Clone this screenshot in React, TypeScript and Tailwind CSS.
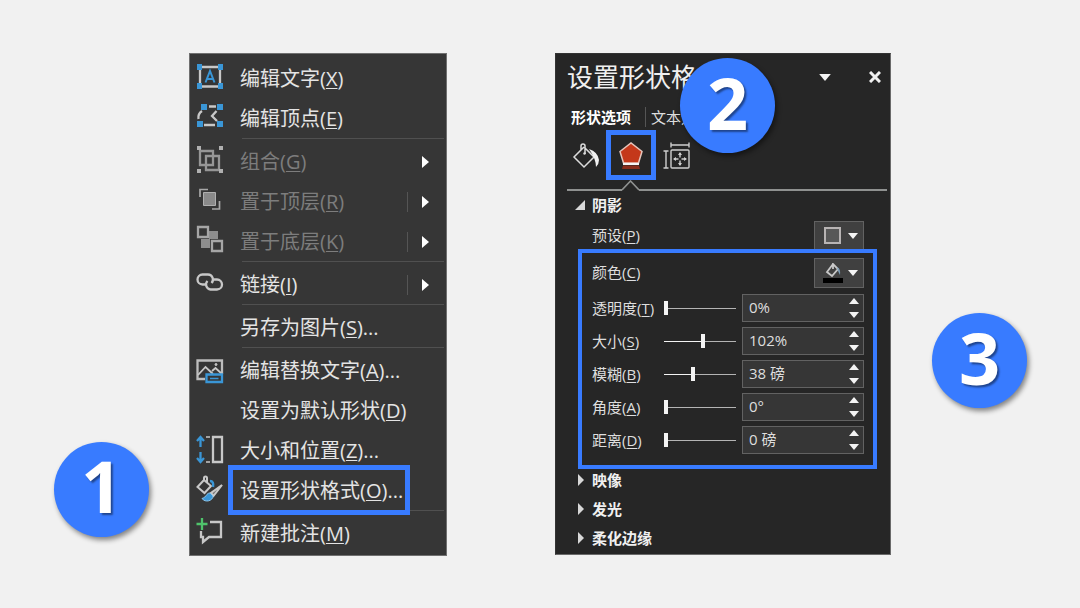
import { FC, Fragment, PropsWithChildren, ReactElement, ReactNode, useState } from "react";

type MenuItem = {
  disabled?: boolean;
  hotkey: string;
  icon?: ReactNode;
  label: string;
  marked?: boolean;
  more?: boolean;
  separator?: boolean;
  split?: boolean;
  submenu?: boolean;
};

type SliderItem = { hotkey: string; id: string; label: string; percent: number; value: string };

const Icon: FC<PropsWithChildren> = (props): ReactElement => (
  <svg aria-hidden="true" className="size-7 shrink-0 overflow-visible" fill="none" stroke="#c8c8c8" strokeWidth="2.300" viewBox="0 0 28 28">
    {props.children}
  </svg>
);

const menu: MenuItem[] = [
  {
    label: "编辑文字",
    hotkey: "X",
    icon: (
      <Icon>
        <path d="M4 2H24V21.500H4Z" />
        <path d="M9.500 17.500L14 6L18.500 17.500M11 14H17" stroke="#3a96d6" strokeWidth="2" />
        <path d="M1-1h5v6H1zM22-1h5v6h-5zM1 18h5v6H1zM22 18h5v6h-5z" fill="#3a96d6" stroke="none" />
      </Icon>
    ),
  },
  {
    label: "编辑顶点",
    hotkey: "E",
    separator: true,
    icon: (
      <Icon>
        <path d="M13 1.500H20M6 6C3 8 2 11 2.500 14M8 20H19M20.500 6L16 11L21 16" />
        <path d="M5-1h6v6H5zM21-1h6v6h-6zM1 16h6v6H1zM21 16h6v6h-6z" fill="#3a96d6" stroke="none" />
      </Icon>
    ),
  },
  {
    label: "组合",
    hotkey: "G",
    disabled: true,
    submenu: true,
    icon: (
      <Icon>
        <path d="M4 3H17V17H4ZM10 8H23V22H10Z" stroke="#969696" />
        <path d="M1-2h4v4H1zM23-2h4v4h-4zM1 21h4v4H1zM23 21h4v4h-4z" fill="#b0b0b0" stroke="none" />
      </Icon>
    ),
  },
  {
    label: "置于顶层",
    hotkey: "R",
    disabled: true,
    split: true,
    submenu: true,
    icon: (
      <Icon>
        <path d="M4 9V1.500H12M16 21H23.500V13" stroke="#a8a8a8" strokeWidth="1.700" />
        <path d="M7.500 4.500H19.500V17.500H7.500Z" fill="#8a8a8a" stroke="#b0b0b0" strokeWidth="1" />
      </Icon>
    ),
  },
  {
    label: "置于底层",
    hotkey: "K",
    disabled: true,
    split: true,
    submenu: true,
    separator: true,
    icon: (
      <Icon>
        <path d="M13 3h9v8h-9zM5 11h9v9H5z" fill="#8e8e8e" stroke="none" />
        <path d="M2-1H12V9H2ZM16 13H26V23H16Z" fill="#363636" stroke="#a6a6a6" />
      </Icon>
    ),
  },
  {
    label: "链接",
    hotkey: "I",
    split: true,
    submenu: true,
    separator: true,
    icon: (
      <Icon>
        <path d="M9 13.500H6.500A5 5 0 0 1 6.500 3.500H12A5 5 0 0 1 15.500 12M18 8.500H21A5 5 0 0 1 21 18.500H14.500A5 5 0 0 1 11.500 10" />
      </Icon>
    ),
  },
  { label: "另存为图片", hotkey: "S", more: true, separator: true },
  {
    label: "编辑替换文字",
    hotkey: "A",
    more: true,
    icon: (
      <Icon>
        <path d="M9 22H1.500V3.500H26V17" stroke="#bdbdbd" />
        <path d="M2 18L9.500 10L17 17M16 14L19.500 11L26 17" strokeWidth="1.800" />
        <circle cx="20" cy="7.500" fill="#c8c8c8" r="1" strokeWidth="1" />
        <path d="M10.500 17.500H26V25H10.500Z" fill="#363636" stroke="#3a96d6" />
        <path d="M14 21.500H22.500" stroke="#3a96d6" strokeWidth="1.500" />
      </Icon>
    ),
  },
  { label: "设置为默认形状", hotkey: "D" },
  {
    label: "大小和位置",
    hotkey: "Z",
    more: true,
    icon: (
      <Icon>
        <path d="M4.500 0V10M1 4L4.500 0L8 4M4.500 15V25M1 21L4.500 25L8 21" stroke="#3a96d6" />
        <path d="M17 0H26V25H17Z" />
        <path d="M10 0H14M10 25H14" strokeWidth="1.700" />
      </Icon>
    ),
  },
  {
    label: "设置形状格式",
    hotkey: "O",
    more: true,
    marked: true,
    separator: true,
    icon: (
      <Icon>
        <path d="M8 3L1.500 10L8.500 16L15 9L8 3V1C8-1 11-1 11 1V6" strokeWidth="2" />
        <path d="M14 4Q18 4 17 10" stroke="#3a96d6" strokeWidth="2.500" />
        <path d="M26 8L15 16L17.500 19Z" fill="#777" strokeWidth="2" />
        <path d="M14 16C10 16 11 20 6 21.500C9 26 17 24 17 19Z" fill="#3a96d6" stroke="#8cc4ea" strokeWidth="1" />
      </Icon>
    ),
  },
  {
    label: "新建批注",
    hotkey: "M",
    icon: (
      <Icon>
        <path d="M14 2H25V17H13L7 22V17H5V11" />
        <path d="M6-2V10M.500 4H11.500" stroke="#4fc36b" />
      </Icon>
    ),
  },
];

const sliders: SliderItem[] = [
  { id: "transparency", label: "透明度", hotkey: "T", value: "0%", percent: 0 },
  { id: "size", label: "大小", hotkey: "S", value: "102%", percent: 54 },
  { id: "blur", label: "模糊", hotkey: "B", value: "38 磅", percent: 40 },
  { id: "angle", label: "角度", hotkey: "A", value: "0°", percent: 0 },
  { id: "distance", label: "距离", hotkey: "D", value: "0 磅", percent: 0 },
];

const Hotkey: FC<{ letter: string }> = (props): ReactElement => (
  <>
    (<span className="underline decoration-1 underline-offset-2">{props.letter}</span>)
  </>
);

const Badge: FC<PropsWithChildren<{ className: string }>> = (props): ReactElement => (
  <div
    className={`absolute flex size-[95px] items-center justify-center rounded-full bg-[#387bff] pb-2 font-["Open_Sans",sans-serif] text-[72px] leading-none font-bold text-white shadow-[2px_3px_5px_rgba(0,0,0,0.45)] text-shadow-[2px_2px_2px_rgba(0,0,0,0.45)] ${props.className}`}
  >
    {props.children}
  </div>
);

const CaretDown: FC<{ className?: string }> = (props): ReactElement => (
  <svg aria-hidden="true" className={props.className} fill="#f4f4f4" height="6" viewBox="0 0 10 6" width="10">
    <path d="M0 0H10L5 6Z" />
  </svg>
);

const MenuRow: FC<{ item: MenuItem }> = ({ item }): ReactElement => (
  <button
    className={`relative flex h-10 w-full items-center pl-1.5 text-left text-xl whitespace-nowrap ${item.disabled ? "text-[#7d7d7d]" : "text-[#e4e4e4]"}`}
    type="button"
  >
    <span className="mr-4 size-7">{item.icon}</span>
    <span className="flex-1">
      {item.label}
      <Hotkey letter={item.hotkey} />
      {item.more && "..."}
    </span>
    {item.split && <span className="mr-3.5 h-5 w-px bg-[#555]" />}
    {item.submenu && (
      <svg aria-hidden="true" className="mr-[17px]" fill="#fff" height="12" viewBox="0 0 7 12" width="7">
        <path d="M0 0L7 6L0 12Z" />
      </svg>
    )}
    {item.marked && <span className="absolute -top-1.5 -bottom-1 left-[38px] w-[182px] border-5 border-[#387bff]" />}
  </button>
);

const ContextMenu: FC = (): ReactElement => (
  <nav className="w-[258px] border border-[#707070] bg-[#363636] pt-[5px] pb-px">
    {menu.map((item) => (
      <Fragment key={item.hotkey}>
        <MenuRow item={item} />
        {item.separator && <div className="-mt-px mr-0.5 mb-[3px] ml-[52px] h-px bg-[#505050]" />}
      </Fragment>
    ))}
  </nav>
);

const SliderRow: FC<{ item: SliderItem }> = ({ item }): ReactElement => {
  const [percent, setPercent] = useState(item.percent);

  return (
    <div className="grid grid-cols-[72px_1fr_122px] items-center">
      <label className="whitespace-nowrap" htmlFor={item.id}>
        {item.label}
        <Hotkey letter={item.hotkey} />
      </label>
      <input
        aria-label={item.label}
        className="mr-1.5 h-3.5 min-w-0 appearance-none bg-[length:100%_1px] bg-center bg-no-repeat [&::-webkit-slider-thumb]:h-3.5 [&::-webkit-slider-thumb]:w-1 [&::-webkit-slider-thumb]:appearance-none [&::-webkit-slider-thumb]:bg-[#f4f4f4]"
        onChange={(e) => setPercent(Number(e.target.value))}
        style={{ backgroundImage: `linear-gradient(to right, #f4f4f4 ${percent}%, #b4b4b4 ${percent}%)` }}
        type="range"
        value={percent}
      />
      <div className="flex h-7 items-center border border-[#626262] bg-[#363636] pr-1 pl-1.5">
        <input className="w-0 min-w-0 flex-1 bg-transparent pb-0.5 outline-none" defaultValue={item.value} id={item.id} type="text" />
        <span className="flex flex-col gap-2">
          <button aria-label="+" className="block" type="button">
            <CaretDown className="rotate-180" />
          </button>
          <button aria-label="-" className="block" type="button">
            <CaretDown />
          </button>
        </span>
      </div>
    </div>
  );
};

const FormatPane: FC = (): ReactElement => (
  <section className="w-[336px] border border-[#6a6a6a] border-t-[#333] border-l-[#333] bg-[#262626] pb-[5px] text-[15px] leading-5 text-[#dedede]">
    <header className="flex h-[50px] items-center pr-[9px] pb-1 pl-[11px]">
      <h2 className="flex-1 text-[26px] leading-9 text-[#f0f0f0]">设置形状格式</h2>
      <button aria-label="▾" className="mr-[38px]" type="button">
        <CaretDown className="h-[7px] w-3" />
      </button>
      <button aria-label="×" className="block" type="button">
        <svg aria-hidden="true" height="12" stroke="#f0f0f0" strokeWidth="3" viewBox="0 0 12 12" width="12">
          <path d="M1 1L11 11M11 1L1 11" />
        </svg>
      </button>
    </header>

    <div className="flex h-[26px] items-center pl-[15px]">
      <button className="font-bold text-white" type="button">
        形状选项
      </button>
      <span className="mr-[5px] ml-3.5 h-5 w-px bg-[#555]" />
      <button type="button">文本选项</button>
    </div>

    <div className="flex h-[50px] items-center pl-4">
      <button aria-label="填充与线条" className="pt-1" type="button">
        <svg aria-hidden="true" className="size-[30px]" fill="none" stroke="#dcdcdc" strokeWidth="1.500" viewBox="0 0 30 30">
          <path d="M12 5L2 15L12 25L22 15L13 6M9 8V4Q9 2 11 2Q13 2 13 4V12" />
          <circle cx="12.500" cy="11.500" fill="#dcdcdc" r="1.200" stroke="none" />
          <path d="M17 7Q26 10 27 18Q27 22 24 25Q24 17 17 7Z" fill="#f0f0f0" stroke="none" />
        </svg>
      </button>
      <button aria-label="效果" className="ml-1 flex size-[50px] items-center justify-center border-5 border-[#387bff]" type="button">
        <svg aria-hidden="true" className="size-7" viewBox="0 0 28 28">
          <path d="M3 10.500L14 2L25 10.500L21.500 22H6.500Z" fill="#c4381a" stroke="#e6c4ba" strokeWidth="1.500" />
          <path d="M6 23H22" stroke="#f4f4f4" strokeWidth="2" />
          <path d="M6 24.500H22L23 28H5Z" fill="#8a2d1b" />
        </svg>
      </button>
      <button aria-label="大小与属性" className="ml-1.5 pt-1" type="button">
        <svg aria-hidden="true" className="size-[30px]" fill="none" stroke="#cfcfcf" strokeWidth="1.400" viewBox="0 0 30 30">
          <path d="M9 3H27M9 .500V5.500M27 .500V5.500M4 9V26M1.500 9H6.500M1.500 26H6.500" />
          <rect height="18" rx="1" width="18" x="9" y="8" />
          <path d="M12 17H16.500M19.500 17H24M18 11V15.500M18 18.500V23" />
          <path d="M11 17L14 15V19ZM25 17L22 15V19ZM18 10L16 13H20ZM18 24L16 21H20Z" fill="#cfcfcf" stroke="none" />
        </svg>
      </button>
    </div>

    <div className="flex h-[11px] pr-[3px] pl-[11px]">
      <span className="w-[55px] border-b-2 border-[#8f9190]" />
      <svg aria-hidden="true" fill="none" height="11" stroke="#8f9190" strokeWidth="1.600" viewBox="0 0 17 11" width="17">
        <path d="M0 10L8.500 1L17 10" />
      </svg>
      <span className="flex-1 border-b-2 border-[#8f9190]" />
    </div>

    <button className="flex h-7 items-center pl-[19px] font-bold text-[#f0f0f0]" type="button">
      <svg aria-hidden="true" className="mr-[7px]" fill="#d8d8d8" height="10" viewBox="0 0 10 10" width="10">
        <path d="M10 0V10H0Z" />
      </svg>
      阴影
    </button>

    <div className="flex items-center justify-between pt-0.5 pr-[26px] pl-9">
      <label htmlFor="preset">
        预设
        <Hotkey letter="P" />
      </label>
      <button className="flex h-7 w-[50px] items-center justify-between border border-b-0 border-[#626262] bg-[#404040] pr-[5px] pl-[9px]" id="preset" type="button">
        <span className="size-[17px] border-2 border-[#b8b4b4] bg-[#585858]" />
        <CaretDown />
      </button>
    </div>

    <div className="mr-[13px] ml-[22px] border-4 border-[#387bff] pt-[5px] pr-[9px] pb-[11px] pl-[10px]">
      <div className="mb-1.5 flex items-center justify-between">
        <label className="pb-0.5" htmlFor="color">
          颜色
          <Hotkey letter="C" />
        </label>
        <button className="flex h-[30px] w-[50px] items-center justify-between border border-[#626262] bg-[#404040] pr-[5px] pl-2" id="color" type="button">
          <svg aria-hidden="true" className="h-5 w-5" fill="none" viewBox="0 0 20 20">
            <path d="M10 1L4 9L9 13L15 6L10 1V6" stroke="#c8c8c8" strokeWidth="1.800" />
            <path d="M14 4Q18 6 17 12L15 8Z" fill="#7d9cb4" />
            <path d="M0 15H20V20H0Z" fill="#000" />
          </svg>
          <CaretDown />
        </button>
      </div>
      <div className="flex flex-col gap-[5px]">
        {sliders.map((item) => (
          <SliderRow item={item} key={item.id} />
        ))}
      </div>
    </div>

    <div className="flex flex-col items-start gap-[7px] pl-[22px]">
      {["映像", "发光", "柔化边缘"].map((label) => (
        <button className="flex h-[22px] items-center font-bold text-[#f0f0f0]" key={label} type="button">
          <svg aria-hidden="true" className="mr-2" fill="#d8d8d8" height="12" viewBox="0 0 6 12" width="6">
            <path d="M0 0L6 6L0 12Z" />
          </svg>
          {label}
        </button>
      ))}
    </div>
  </section>
);

export default function App(): ReactElement {
  return (
    <main className='flex min-h-screen items-center justify-center gap-[108px] bg-[#f1f1f1] font-["Open_Sans","Noto_Sans_CJK_SC",sans-serif]'>
      <div className="relative">
        <ContextMenu />
        <Badge className="top-[389px] -left-[135px]">1</Badge>
      </div>
      <div className="relative">
        <FormatPane />
        <Badge className="top-[5px] left-[125px]">2</Badge>
        <Badge className="top-[260px] left-[377px]">3</Badge>
      </div>
    </main>
  );
}
